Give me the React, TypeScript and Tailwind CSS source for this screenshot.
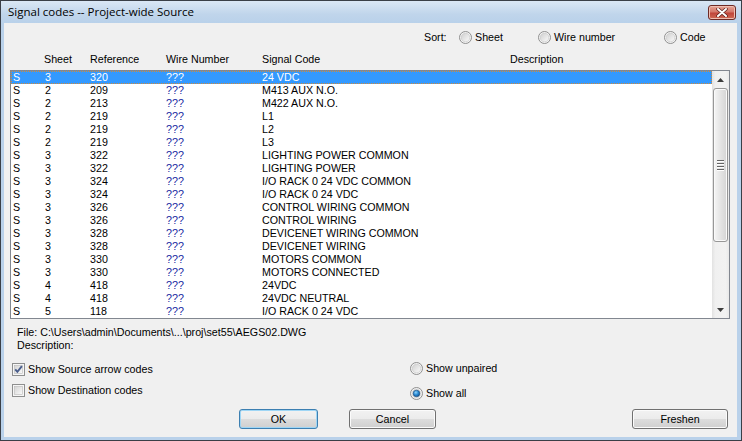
import React from "react";

const rows: [string, string, string][] = [
  ["3", "320", "24 VDC"],
  ["2", "209", "M413 AUX N.O."],
  ["2", "213", "M422 AUX N.O."],
  ["2", "219", "L1"],
  ["2", "219", "L2"],
  ["2", "219", "L3"],
  ["3", "322", "LIGHTING POWER COMMON"],
  ["3", "322", "LIGHTING POWER"],
  ["3", "324", "I/O RACK 0 24 VDC COMMON"],
  ["3", "324", "I/O RACK 0 24 VDC"],
  ["3", "326", "CONTROL WIRING COMMON"],
  ["3", "326", "CONTROL WIRING"],
  ["3", "328", "DEVICENET WIRING COMMON"],
  ["3", "328", "DEVICENET WIRING"],
  ["3", "330", "MOTORS COMMON"],
  ["3", "330", "MOTORS CONNECTED"],
  ["4", "418", "24VDC"],
  ["4", "418", "24VDC NEUTRAL"],
  ["5", "118", "I/O RACK 0 24 VDC"],
];

function Radio({ checked, id }: { checked?: boolean; id: string }) {
  return (
    <svg width="13" height="13" viewBox="0 0 13 13" className="shrink-0">
      <defs>
        <linearGradient id={`rg${id}`} x1="0" y1="0" x2="1" y2="1">
          <stop offset="0" stopColor="#cfcfcf" />
          <stop offset="1" stopColor="#fbfbfb" />
        </linearGradient>
        <radialGradient id={`rd${id}`} cx="0.4" cy="0.35" r="0.7">
          <stop offset="0" stopColor="#8fd3fa" />
          <stop offset="0.5" stopColor="#2a8ad4" />
          <stop offset="1" stopColor="#0d4f8c" />
        </radialGradient>
      </defs>
      <circle cx="6.5" cy="6.5" r="6" fill="#f4f4f4" stroke="#8f8f8f" />
      <circle cx="6.5" cy="6.5" r="4.3" fill={`url(#rg${id})`} stroke="#c4c4c4" strokeWidth="0.6" />
      {checked && <circle cx="6.5" cy="6.5" r="3.3" fill={`url(#rd${id})`} stroke="#1c4a7a" strokeWidth="0.6" />}
    </svg>
  );
}

function Check({ checked, id }: { checked?: boolean; id: string }) {
  return (
    <svg width="13" height="13" viewBox="0 0 13 13" className="shrink-0">
      <defs>
        <linearGradient id={`cg${id}`} x1="0" y1="0" x2="1" y2="1">
          <stop offset="0" stopColor="#d4d4d4" />
          <stop offset="1" stopColor="#fbfbfb" />
        </linearGradient>
      </defs>
      <rect x="0.5" y="0.5" width="12" height="12" fill="#f6f6f6" stroke="#8e8f8f" />
      <rect x="2.5" y="2.5" width="8" height="8" fill={`url(#cg${id})`} stroke="#b9b9b9" strokeWidth="0.6" />
      {checked && (
        <path d="M3.2 6.3 L5.4 8.8 L9.9 3.2" fill="none" stroke="#4a5e8c" strokeWidth="1.9" />
      )}
    </svg>
  );
}

function Button({ label, def, w }: { label: string; def?: boolean; w: string }) {
  return (
    <div
      className={`${w} h-[20px] rounded-[3px] border flex items-center justify-center text-black bg-[linear-gradient(to_bottom,#f2f2f2_0%,#ebebeb_50%,#dddddd_50%,#cfcfcf_100%)] ${
        def
          ? "border-[#3c7fb1] shadow-[inset_0_0_0_1px_#9fd6f5]"
          : "border-[#707070] shadow-[inset_0_0_0_1px_#fbfbfb]"
      }`}
    >
      {label}
    </div>
  );
}

function Arrow({ up }: { up?: boolean }) {
  return (
    <div className="h-[17px] flex items-center justify-center">
      <svg width="7" height="4" viewBox="0 0 7 4">
        {up ? <path d="M0 4 L3.5 0 L7 4 Z" fill="#3c3c3c" /> : <path d="M0 0 L7 0 L3.5 4 Z" fill="#3c3c3c" />}
      </svg>
    </div>
  );
}

export default function App() {
  return (
    <div
      className="w-[742px] h-[441px] flex flex-col bg-[#b9d1ea] border border-[#3a3f47] overflow-hidden text-[10.7px] leading-[13px] text-black"
      style={{ fontFamily: '"Liberation Sans", Arial, sans-serif' }}
    >
      {/* Title bar */}
      <div className="h-[22px] shrink-0 flex items-start justify-between bg-[linear-gradient(to_bottom,#dae7f5,#c0d5eb_60%,#b9d1ea)]">
        <div className="pl-[7px] pt-[3px] text-[11.5px] leading-[16px] text-black" style={{ fontFamily: '"Open Sans", sans-serif' }}>
          Signal codes -- Project-wide Source
        </div>
        <div className="mt-[4px] mr-[5px] w-[28px] h-[15px] rounded-[3px] border border-[#6e2a25] flex items-center justify-center bg-[linear-gradient(to_bottom,#e6a596_0%,#d4776a_45%,#c0453a_55%,#cf6a55_100%)] shadow-[inset_0_0_0_1px_#eebfb3]">
          <svg width="12" height="9" viewBox="0 0 12 9">
            <path d="M2 1 L10 8 M10 1 L2 8" stroke="#5a1e1a" strokeWidth="3.4" strokeLinecap="round" />
            <path d="M2 1 L10 8 M10 1 L2 8" stroke="#ffffff" strokeWidth="2" strokeLinecap="round" />
          </svg>
        </div>
      </div>

      {/* Client */}
      <div className="ml-[3px] mr-[4px] mb-[3px] h-[414px] bg-[#f0f0f0] flex flex-col">
        {/* Sort row */}
        <div className="mt-[8px] h-[13px] flex items-center pl-[420px]">
          <span className="w-[35px]">Sort:</span>
          <div className="w-[79px] flex items-center gap-[3px]">
            <Radio id="s1" />
            <span>Sheet</span>
          </div>
          <div className="w-[126px] flex items-center gap-[3px]">
            <Radio id="s2" />
            <span>Wire number</span>
          </div>
          <div className="flex items-center gap-[3px]">
            <Radio id="s3" />
            <span>Code</span>
          </div>
        </div>

        {/* Header */}
        <div className="mt-[9px] h-[13px] flex">
          <span className="w-[40px]" />
          <span className="w-[46px]">Sheet</span>
          <span className="w-[76px]">Reference</span>
          <span className="w-[96px]">Wire Number</span>
          <span className="w-[248px]">Signal Code</span>
          <span>Description</span>
        </div>

        {/* List box */}
        <div className="mt-[4px] ml-[6px] w-[720px] h-[249px] border border-[#828790] bg-white flex">
          <div className="flex-1 flex flex-col">
            {rows.map((r, i) => (
              <div
                key={i}
                className={`h-[13px] shrink-0 flex ${
                  i === 0 ? "bg-[#3399ff] text-white outline-1 outline-dotted outline-[#d08a3a] -outline-offset-1" : ""
                }`}
              >
                <span className="w-[34px] pl-[2px]">S</span>
                <span className="w-[45px]">{r[0]}</span>
                <span className="w-[76px]">{r[1]}</span>
                <span className={`w-[96px] ${i === 0 ? "" : "text-[#1426a0]"}`}>???</span>
                <span>{r[2]}</span>
              </div>
            ))}
          </div>
          {/* Scrollbar */}
          <div className="w-[17px] flex flex-col bg-[linear-gradient(to_right,#e2e2e2,#f0f0f0_20%,#f2f2f2_80%,#e9e9e9)]">
            <Arrow up />
            <div className="ml-[1px] w-[15px] h-[154px] rounded-[3px] border border-[#979797] bg-[linear-gradient(to_right,#f5f5f5,#e4e4e4_50%,#d4d4d4)] shadow-[inset_0_0_0_1px_#fafafa] flex flex-col items-center justify-center gap-[1px]">
              <div className="w-[7px] h-[1px] bg-[#646464] shadow-[0_1px_0_#ffffff]" />
              <div className="w-[7px] h-[1px] bg-[#646464] shadow-[0_1px_0_#ffffff] mt-[1px]" />
              <div className="w-[7px] h-[1px] bg-[#646464] shadow-[0_1px_0_#ffffff] mt-[1px]" />
              <div className="w-[7px] h-[1px] bg-[#646464] shadow-[0_1px_0_#ffffff] mt-[1px]" />
            </div>
            <div className="flex-1" />
            <Arrow />
          </div>
        </div>

        {/* File info */}
        <div className="mt-[7px] pl-[13px]">
          <div className="h-[13px]">File: C:\Users\admin\Documents\...\proj\set55\AEGS02.DWG</div>
          <div className="h-[13px]">Description:</div>
        </div>

        {/* Options */}
        <div className="flex">
          <div className="ml-[8px] w-[398px] flex flex-col">
            <div className="mt-[11px] h-[13px] flex items-center gap-[3px]">
              <Check checked id="c1" />
              <span>Show Source arrow codes</span>
            </div>
            <div className="mt-[8px] h-[13px] flex items-center gap-[3px]">
              <Check id="c2" />
              <span>Show Destination codes</span>
            </div>
          </div>
          <div className="flex flex-col">
            <div className="mt-[10px] h-[13px] flex items-center gap-[3px]">
              <Radio id="r1" />
              <span>Show unpaired</span>
            </div>
            <div className="mt-[12px] h-[13px] flex items-center gap-[3px]">
              <Radio checked id="r2" />
              <span>Show all</span>
            </div>
          </div>
        </div>

        {/* Buttons */}
        <div className="mt-[9px] flex">
          <div className="ml-[235px]">
            <Button label="OK" def w="w-[79px]" />
          </div>
          <div className="ml-[31px]">
            <Button label="Cancel" w="w-[87px]" />
          </div>
          <div className="ml-[196px]">
            <Button label="Freshen" w="w-[96px]" />
          </div>
        </div>
      </div>
    </div>
  );
}
